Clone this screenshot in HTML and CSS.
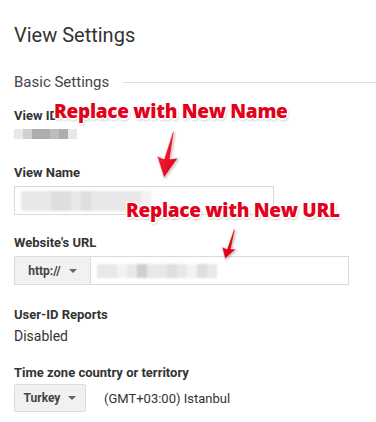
FILE: index.html
```html
<!DOCTYPE html>
<html lang="en">
<head>
<meta charset="UTF-8">
<title>View Settings</title>
<link rel="stylesheet" href="styles.css">
</head>
<body>

<div class="page">
    <h1 class="title">View Settings</h1>

    <div class="section-head">
        <span>Basic Settings</span>
        <div class="rule"></div>
    </div>

    <div class="field">
        <div class="label">View ID</div>
        <div class="pixels id-blur">
            <span class="p1"></span><span class="p3"></span><span class="p5"></span><span class="p5"></span><span class="p4"></span><span class="p5"></span><span class="p1"></span>
        </div>
    </div>

    <div class="field field-name">
        <div class="label">View Name</div>
        <div class="input name-input">
            <div class="pixels name-blur">
                <span class="p1"></span><span class="p1"></span><span class="p1"></span><span class="p2"></span><span class="p2"></span><span class="p1"></span><span class="p2"></span><span class="p1"></span><span class="p1"></span><span class="p1"></span><span class="p1"></span><span class="p1"></span><span class="p0"></span>
            </div>
        </div>
    </div>

    <div class="field">
        <div class="label">Website's URL</div>
        <div class="url-row">
            <div class="select">http:// <span class="caret"></span></div>
            <div class="input url-input">
                <div class="pixels url-blur">
                    <span class="p1"></span><span class="p1"></span><span class="p0"></span><span class="p1"></span><span class="p3"></span><span class="p1"></span><span class="p1"></span><span class="p2"></span><span class="p1"></span><span class="p0"></span><span class="p2"></span><span class="p1"></span>
                </div>
            </div>
        </div>
    </div>

    <div class="field field-user">
        <div class="label label-tight">User-ID Reports</div>
        <div class="value">Disabled</div>
    </div>

    <div class="field">
        <div class="label label-tz">Time zone country or territory</div>
        <div class="tz-row">
            <div class="select select-small">Turkey <span class="caret"></span></div>
            <span class="tz-name">(GMT+03:00) Istanbul</span>
        </div>
    </div>
</div>

<!-- annotations drawn over the screenshot -->
<div class="note note-name">Replace with New Name</div>
<div class="note note-url">Replace with New URL</div>

<svg class="arrow arrow-name" width="36" height="56" viewBox="0 0 36 56">
    <defs>
        <linearGradient id="redGrad" x1="0" y1="0" x2="1" y2="1">
            <stop offset="0" stop-color="#ff2a3c"/>
            <stop offset="1" stop-color="#d6001a"/>
        </linearGradient>
    </defs>
    <polygon points="23,3 24,4 20,31 28,30 14,50 7,28 14,31" fill="url(#redGrad)" stroke="#fff" stroke-width="0.6"/>
</svg>

<svg class="arrow arrow-url" width="26" height="36" viewBox="0 0 26 36">
    <polygon points="19,3 20,4 16,23 21,23 10,33 7,21 12,23" fill="#e3001b" stroke="#fff" stroke-width="0.5"/>
</svg>

</body>
</html>
```

FILE: styles.css
```css
body {
    margin: 0;
    background-color: #fff;
    font-family: Roboto, "Liberation Sans", sans-serif;
    color: #333;
    overflow: hidden;
}
.page {
    padding: 23px 0 0 14px;
}
.title {
    margin: 0;
    font-size: 20px;
    font-weight: 400;
    line-height: 24px;
    color: #333;
}
.section-head {
    display: flex;
    align-items: center;
    margin-top: 25px;
    font-size: 15px;
    line-height: 20px;
    color: #444;
}
.rule {
    flex: 1;
    height: 1px;
    margin-left: 14px;
    background-color: #ddd;
}
.field {
    margin-top: 16px;
}
.field + .field {
    margin-top: 20px;
}
.field-name {
    margin-top: 26px !important;
}
.field-user {
    margin-top: 22px !important;
}
.label {
    font-size: 13px;
    font-weight: 700;
    line-height: 16px;
    color: #333;
    margin-bottom: 5px;
}
.label-tight {
    margin-bottom: 4px;
}
.label-tz {
    margin-bottom: 3px;
}
.value {
    font-size: 14px;
    line-height: 18px;
    color: #333;
}
.pixels {
    display: flex;
}
.pixels span {
    width: 10px;
    height: 10px;
}
.p0 { background-color: #f3f3f3; }
.p1 { background-color: #e8e8e8; }
.p2 { background-color: #dedede; }
.p3 { background-color: #cfcfcf; }
.p4 { background-color: #bdbdbd; }
.p5 { background-color: #adadad; }
.id-blur {
    margin-top: 4px;
    height: 10px;
    filter: blur(0.6px);
}
.id-blur span {
    width: 9px;
}
.input {
    box-sizing: border-box;
    height: 29px;
    border: 1px solid #d9d9d9;
    background-color: #fff;
    display: flex;
    align-items: center;
}
.name-input {
    width: 260px;
    padding-left: 6px;
}
.name-blur span {
    height: 20px;
}
.name-blur {
    filter: blur(1px);
}
.url-row,
.tz-row {
    display: flex;
    align-items: center;
}
.select {
    box-sizing: border-box;
    height: 29px;
    display: flex;
    align-items: center;
    justify-content: center;
    gap: 8px;
    width: 77px;
    border: 1px solid #dcdcdc;
    background-color: #f1f1f1;
    font-size: 12px;
    font-weight: 700;
    color: #444;
}
.select-small {
    width: 72px;
    height: 28px;
    border-radius: 2px;
}
.caret {
    width: 0;
    height: 0;
    border-left: 4px solid transparent;
    border-right: 4px solid transparent;
    border-top: 4px solid #666;
}
.url-input {
    width: 258px;
    border-left: 0;
    padding-left: 6px;
}
.url-blur span {
    height: 14px;
}
.url-blur {
    filter: blur(1px);
}
.tz-name {
    margin-left: 18px;
    font-size: 13px;
    color: #333;
}
.note {
    position: absolute;
    font-family: "Open Sans", "DejaVu Sans", sans-serif;
    font-weight: 800;
    font-size: 19px;
    line-height: 24px;
    letter-spacing: -0.3px;
    color: #e2001a;
    white-space: nowrap;
    text-shadow:
        -1px -1px 0 #fff, 1px -1px 0 #fff, -1px 1px 0 #fff, 1px 1px 0 #fff,
        0 -1.5px 0 #fff, 0 1.5px 0 #fff, -1.5px 0 0 #fff, 1.5px 0 0 #fff,
        1px 2px 3px rgba(0, 0, 0, 0.35);
}
.note-name {
    left: 54px;
    top: 99px;
}
.note-url {
    left: 126px;
    top: 198px;
}
.arrow {
    position: absolute;
    filter: drop-shadow(1px 1px 1px rgba(0, 0, 0, 0.25));
}
.arrow-name {
    left: 150px;
    top: 128px;
}
.arrow-url {
    left: 215px;
    top: 226px;
}
```
